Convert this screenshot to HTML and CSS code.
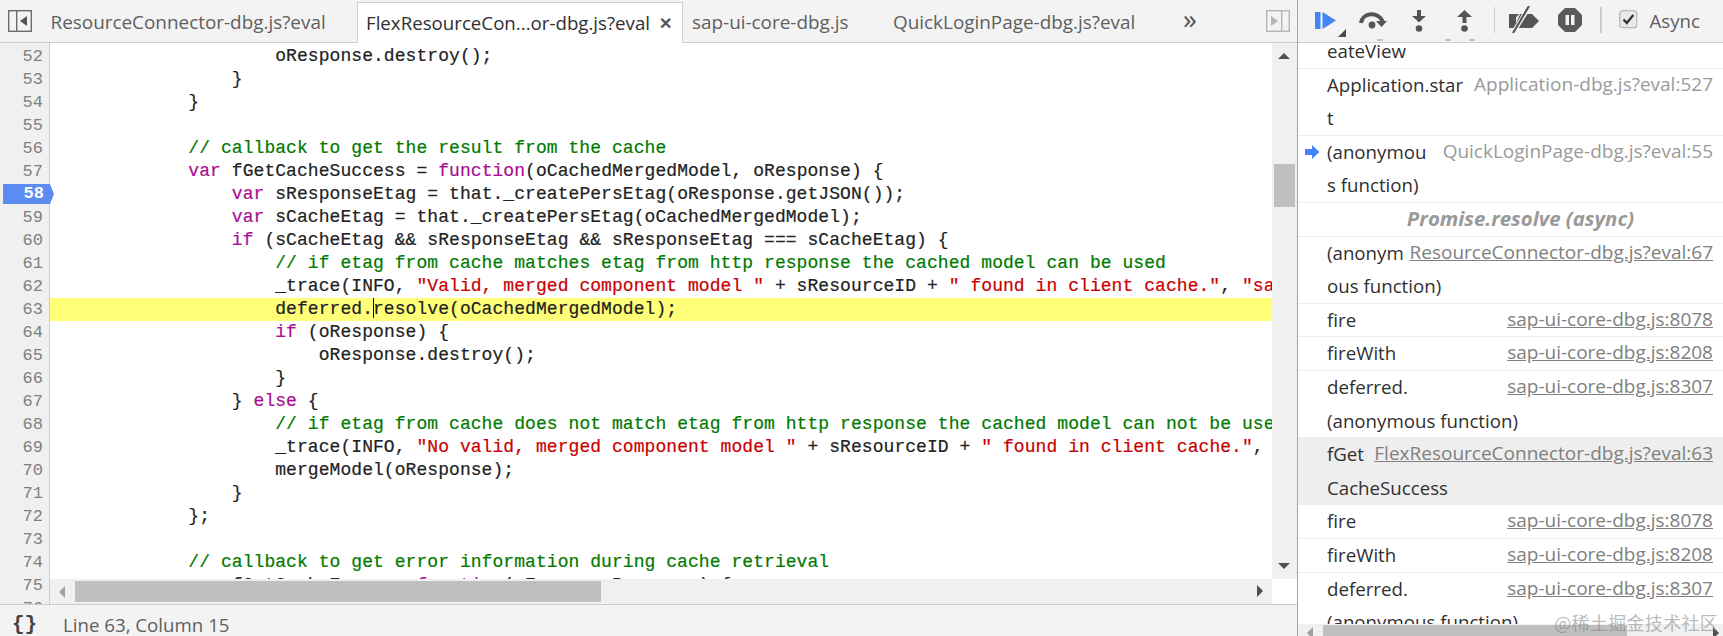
FILE: index.html
```html
<!DOCTYPE html>
<html lang="en">
<head>
<meta charset="utf-8">
<title>Sources</title>
<link rel="stylesheet" href="styles.css">
</head>
<body>
<div class="app">
  <div class="left">
    <div class="tabbar">
      <svg class="toggle" width="24" height="22" viewBox="0 0 24 22"><rect x="0.700" y="0.700" width="22.600" height="20.600" fill="none" stroke="#6e6e6e" stroke-width="1.400"/><rect x="8" y="1" width="1.400" height="20" fill="#6e6e6e"/><path d="M19 6v10l-7-5z" fill="#555"/></svg>
      <div class="tab t1">ResourceConnector-dbg.js?eval</div>
      <div class="tab active">FlexResourceCon...or-dbg.js?eval<span class="close">✕</span></div>
      <div class="tab t3">sap-ui-core-dbg.js</div>
      <div class="tab t4">QuickLoginPage-dbg.js?eval</div>
      <div class="more">»</div>
      <svg class="toggle2" width="24" height="22" viewBox="0 0 24 22"><rect x="0.700" y="0.700" width="22.600" height="20.600" fill="none" stroke="#b5b5b5" stroke-width="1.400"/><rect x="15" y="1" width="1.400" height="20" fill="#b5b5b5"/><path d="M5 6v10l7-5z" fill="#b5b5b5"/></svg>
    </div>
    <div class="editor">
      <div class="gutter">
        <div>52</div><div>53</div><div>54</div><div>55</div><div>56</div><div>57</div>
        <div class="bp">58</div>
        <div>59</div><div>60</div><div>61</div><div>62</div><div>63</div><div>64</div><div>65</div><div>66</div><div>67</div><div>68</div><div>69</div><div>70</div><div>71</div><div>72</div><div>73</div><div>74</div><div>75</div><div>76</div>
      </div>
      <div class="code">
<div class="ln">                    oResponse.destroy();</div>
<div class="ln">                }</div>
<div class="ln">            }</div>
<div class="ln"> </div>
<div class="ln">            <span class="c">// callback to get the result from the cache</span></div>
<div class="ln">            <span class="k">var</span> fGetCacheSuccess = <span class="k">function</span>(oCachedMergedModel, oResponse) {</div>
<div class="ln">                <span class="k">var</span> sResponseEtag = that._createPersEtag(oResponse.getJSON());</div>
<div class="ln">                <span class="k">var</span> sCacheEtag = that._createPersEtag(oCachedMergedModel);</div>
<div class="ln">                <span class="k">if</span> (sCacheEtag &amp;&amp; sResponseEtag &amp;&amp; sResponseEtag === sCacheEtag) {</div>
<div class="ln">                    <span class="c">// if etag from cache matches etag from http response the cached model can be used</span></div>
<div class="ln">                    _trace(INFO, <span class="s">"Valid, merged component model "</span> + sResourceID + <span class="s">" found in client cache."</span>, <span class="s">"sap.ui.fl"</span>);</div>
<div class="ln cur">                    deferred.<span class="caret"></span>resolve(oCachedMergedModel);</div>
<div class="ln">                    <span class="k">if</span> (oResponse) {</div>
<div class="ln">                        oResponse.destroy();</div>
<div class="ln">                    }</div>
<div class="ln">                } <span class="k">else</span> {</div>
<div class="ln">                    <span class="c">// if etag from cache does not match etag from http response the cached model can not be used</span></div>
<div class="ln">                    _trace(INFO, <span class="s">"No valid, merged component model "</span> + sResourceID + <span class="s">" found in client cache."</span>, <span class="s">"sap.ui.fl"</span>);</div>
<div class="ln">                    mergeModel(oResponse);</div>
<div class="ln">                }</div>
<div class="ln">            };</div>
<div class="ln"> </div>
<div class="ln">            <span class="c">// callback to get error information during cache retrieval</span></div>
<div class="ln">            <span class="k">var</span> fGetCacheError = <span class="k">function</span>(oError, oResponse) {</div>
      </div>
      <div class="vscroll">
        <span class="arrow up"></span>
        <div class="vthumb"></div>
        <span class="arrow down"></span>
      </div>
      <div class="hscroll">
        <span class="arrow lt"></span>
        <div class="hthumb"></div>
        <span class="arrow rt"></span>
      </div>
      <div class="corner"></div>
    </div>
    <div class="status">
      <span class="braces">{}</span>
      <span class="pos">Line 63, Column 15</span>
    </div>
  </div>
  <div class="right">
    <div class="toolbar">
      <svg class="tb-resume" width="31" height="26" viewBox="0 0 31 26"><rect x="0" y="1" width="5.500" height="17" fill="#4285f4"/><path d="M7.500 1L21 9.500 7.500 18z" fill="#4285f4"/><path d="M31 18v8h-8z" fill="#4a4a4a"/></svg>
      <svg class="tb-over" width="29" height="20" viewBox="0 0 29 20"><path d="M3 13C4 3 20 0 25 12" fill="none" stroke="#555" stroke-width="4"/><path d="M18 11h11l-5.500 6z" fill="#555"/><circle cx="14" cy="15" r="3.400" fill="#555"/></svg>
      <svg class="tb-into" width="14" height="22" viewBox="0 0 14 22"><rect x="5" y="0" width="4" height="7" fill="#555"/><path d="M0 6h14l-7 6.500z" fill="#555"/><circle cx="7" cy="18.500" r="3.300" fill="#555"/></svg>
      <svg class="tb-out" width="15" height="22" viewBox="0 0 15 22"><path d="M0 7h15L7.500 0z" fill="#555"/><rect x="5.500" y="6" width="4" height="7" fill="#555"/><circle cx="7.500" cy="18.500" r="3.300" fill="#555"/></svg>
      <span class="sep sep1"></span>
      <svg class="tb-deact" width="30" height="28" viewBox="0 0 30 28"><path d="M0 8h7v14H0zM11 8h12l7 7-7 7H5z" fill="#555"/><path d="M0 8h10L0 20z" fill="#555"/><path d="M20 1L4 27" stroke="#f3f3f3" stroke-width="4.500"/><path d="M20 0L4 27" stroke="#555" stroke-width="2.200"/></svg>
      <svg class="tb-pause" width="24" height="24" viewBox="0 0 24 24"><path d="M7 0h10l7 7v10l-7 7H7l-7-7V7z" fill="#5a5a5a"/><rect x="7.500" y="7" width="3.500" height="10" fill="#f3f3f3"/><rect x="13" y="7" width="3.500" height="10" fill="#f3f3f3"/></svg>
      <span class="sep sep2"></span>
      <svg class="tb-check" width="19" height="19" viewBox="0 0 19 19"><rect x="0.700" y="0.700" width="17" height="17" rx="3" fill="#e9e9e9" stroke="#bbb" stroke-width="1.300"/><path d="M4.500 9.500l3.300 3.500 6.500-8" fill="none" stroke="#333" stroke-width="2.300"/></svg>
      <span class="async">Async</span>
      <span class="mark m1"></span><span class="mark m2"></span><span class="mark m3"></span>
    </div>
    <div class="frames">
      <div class="frames-inner">
        <div class="row"><div class="fn">eateView</div></div>
        <div class="row"><div class="fn">Application.star<br>t</div><div class="loc">Application-dbg.js?eval:527</div></div>
        <div class="row here"><div class="fn">(anonymou<br>s function)</div><div class="loc">QuickLoginPage-dbg.js?eval:55</div>
          <svg class="here-arrow" width="15" height="14" viewBox="0 0 15 14"><path d="M0 4h7V0l7.500 7L7 14v-4H0z" fill="#4285f4"/></svg>
        </div>
        <div class="row async-row">Promise.resolve (async)</div>
        <div class="row"><div class="fn">(anonym<br>ous function)</div><a class="loc link">ResourceConnector-dbg.js?eval:67</a></div>
        <div class="row"><div class="fn">fire</div><a class="loc link">sap-ui-core-dbg.js:8078</a></div>
        <div class="row"><div class="fn">fireWith</div><a class="loc link">sap-ui-core-dbg.js:8208</a></div>
        <div class="row"><div class="fn">deferred.<br>(anonymous function)</div><a class="loc link">sap-ui-core-dbg.js:8307</a></div>
        <div class="row selected"><div class="fn">fGet<br>CacheSuccess</div><a class="loc link">FlexResourceConnector-dbg.js?eval:63</a></div>
        <div class="row"><div class="fn">fire</div><a class="loc link">sap-ui-core-dbg.js:8078</a></div>
        <div class="row"><div class="fn">fireWith</div><a class="loc link">sap-ui-core-dbg.js:8208</a></div>
        <div class="row"><div class="fn">deferred.<br>(anonymous function)</div><a class="loc link">sap-ui-core-dbg.js:8307</a></div>
      </div>
      <div class="fscroll">
        <span class="arrow lt lt2"></span>
        <div class="fthumb"></div>
        <span class="arrow rt rt2"></span>
      </div>
      <div class="watermark">@稀土掘金技术社区</div>
    </div>
  </div>
</div>
</body>
</html>
```

FILE: styles.css
```css
* { box-sizing: border-box; }
html, body { margin: 0; padding: 0; height: 636px; overflow: hidden; background: #fff; }
body { font-family: "Open Sans", "Noto Sans", sans-serif; color: #303030; }
.app { display: flex; height: 636px; }
.left { width: 1297px; flex: none; display: flex; flex-direction: column; }
.right { flex: 1; min-width: 0; display: flex; flex-direction: column; border-left: 1.5px solid #a6a6a6; }

/* tabs */
.tabbar { height: 43px; flex: none; display: flex; align-items: flex-end; background: #f3f3f3; border-bottom: 1px solid #ccc; font-size: 18.900px; color: #5f5f5f; }
.toggle { flex: none; margin: 0 0 10px 8px; }
.tab { height: 39px; line-height: 38px; white-space: nowrap; flex: none; }
.t1 { margin-left: 18.500px; width: 306.500px; }
.active { width: 326px; margin-bottom: -1px; height: 41px; padding-left: 8px; line-height: 40px; font-size: 18.700px; background: #fff; border: 1px solid #ccc; border-bottom: 0; color: #303030; display: flex; }
.close { margin-left: 9px; font-size: 16px; color: #555; font-weight: 700; }
.t3 { margin-left: 9px; width: 201px; }
.t4 { width: 290px; }
.more { flex: none; width: 83px; height: 39px; line-height: 30px; font-size: 28px; color: #555; }
.toggle2 { flex: none; margin-bottom: 10px; }

/* editor */
.editor { flex: 1; min-height: 0; display: grid; grid-template-columns: 50px 1fr 25px; grid-template-rows: 1fr 25px; overflow: hidden; }
.gutter { grid-row: 1 / 3; grid-column: 1; position: relative; z-index: 1; background: #f0f0f0; border-right: 1px solid #ccc; padding-top: 1.500px; font: 17px/23px "Liberation Mono", monospace; color: #808080; text-align: right; padding-right: 6px; }
.bp { position: relative; margin: 1.500px -6px 1.500px 3px; padding-right: 10px; background: #5c8cf2; color: #fff; font-weight: 700; height: 20px; line-height: 20px; width: 51px; clip-path: polygon(0 0, 47px 0, 100% 50%, 47px 100%, 0 100%); }
.code { grid-column: 2; grid-row: 1; min-width: 0; padding-top: 1.500px; font: 18px/23px "Liberation Mono", monospace; letter-spacing: 0.060px; color: #222; overflow: hidden; -webkit-text-stroke: 0.200px; }
.ln { white-space: pre; padding-left: 8px; height: 23px; }
.cur { background: #ffff78; }
.c { color: #007a00; }
.k { color: #aa0d91; }
.s { color: #c80000; }
.caret { display: inline-block; width: 0; height: 20px; border-left: 1px solid #111; vertical-align: -4px; margin-right: -1px; }
.vscroll { grid-column: 3; grid-row: 1; background: #f0f0f0; position: relative; padding: 121px 2px 0 2px; }
.vthumb { height: 43px; background: #bfbfbf; }
.hscroll { grid-column: 2; grid-row: 2; background: #f0f0f0; position: relative; padding: 2px 0 2px 25px; }
.hthumb { width: 526px; height: 21px; background: #bfbfbf; }
.corner { grid-column: 3; grid-row: 2; background: #fff; }
.arrow { position: absolute; width: 0; height: 0; border-style: solid; border-color: transparent; }
.up { top: 10px; left: 6px; border-width: 0 6px 6px; border-bottom-color: #505050; }
.down { bottom: 10px; left: 6px; border-width: 6px 6px 0; border-top-color: #505050; }
.lt { left: 9px; top: 7px; border-width: 6px 6px 6px 0; border-right-color: #a0a0a0; }
.rt { right: 9px; top: 6px; border-width: 6px 0 6px 6px; border-left-color: #505050; }

/* status */
.status { height: 32px; flex: none; background: #f3f3f3; border-top: 1px solid #ccc; display: flex; align-items: center; font-size: 18.700px; color: #5f5f5f; padding-top: 8px; }
.braces { margin-left: 12px; width: 51px; font: 700 21px/1 "Liberation Mono", monospace; color: #444; letter-spacing: 0; }

/* debugger toolbar */
.toolbar { height: 43px; flex: none; background: #f3f3f3; border-bottom: 1px solid #ccc; display: flex; align-items: flex-start; position: relative; z-index: 2; }
.tb-resume { margin: 11px 0 0 16.500px; }
.tb-over { margin: 10px 0 0 12px; }
.tb-into { margin: 10px 0 0 25px; }
.tb-out { margin: 10px 0 0 31px; }
.sep { width: 1.500px; height: 26px; margin-top: 7px; background: #ccc; flex: none; }
.sep1 { margin-left: 22px; }
.tb-deact { margin: 6px 0 0 14px; }
.tb-pause { margin: 8px 0 0 19px; }
.sep2 { margin-left: 18px; }
.tb-check { margin: 10px 0 0 17px; }
.async { margin: 8px 0 0 12px; font-size: 18.700px; line-height: 26px; color: #5f5f5f; }
.mark { position: absolute; top: 39px; width: 6px; height: 1.500px; background: #c4c4c4; }
.m1 { left: 79px; }
.m2 { left: 147px; }
.m3 { left: 171px; }

/* frames */
.frames { flex: 1; min-height: 0; position: relative; overflow: hidden; }
.frames-inner { margin-top: -8px; font-size: 18.700px; line-height: 33.600px; color: #303030; }
.row { display: flex; padding: 0 10px 0 29px; box-shadow: inset 0 -1px 0 #eee; position: relative; white-space: nowrap; }
.fn { flex: 1 1 0; min-width: 0; margin: -1px 0 1px; }
.loc { flex: none; margin: -1px 0 1px; color: #9a9a9a; font-size: 19px; }
.link { color: #808080; text-decoration: underline; }
.selected { background: #eee; box-shadow: none; }
.async-row { justify-content: center; padding: 0 0 2px 20px; line-height: 31.600px; font-weight: 700; font-style: italic; color: #999; font-size: 20.400px; }
.here-arrow { position: absolute; left: 7px; top: 9px; }
.fscroll { position: absolute; left: 0; right: 0; bottom: 0; height: 12px; background: #f0f0f0; padding: 1px 0 0 25px; }
.fthumb { width: 304px; height: 11px; background: #bfbfbf; }
.lt2 { left: 9px; top: 3px; }
.rt2 { right: 4px; top: 3px; }
.watermark { position: absolute; right: 5px; bottom: 5px; font: 18px/1 "Noto Sans CJK SC", sans-serif; color: rgba(120, 120, 120, 0.5); letter-spacing: 0.300px; }
```
